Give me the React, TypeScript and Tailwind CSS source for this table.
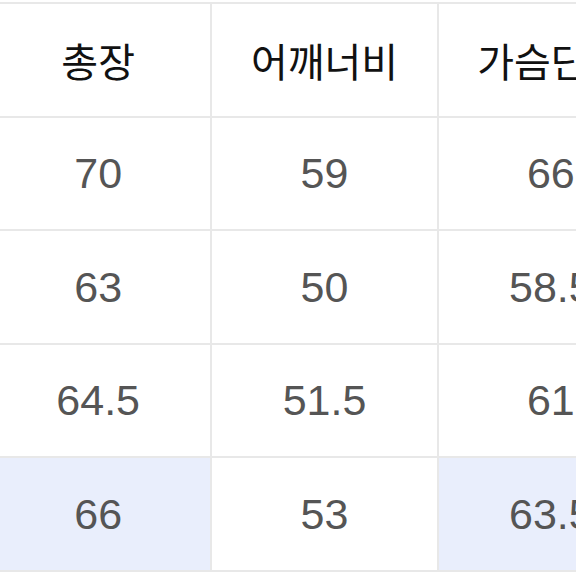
import React from "react";

const header = ["총장", "어깨너비", "가슴단면"];
const rows = [
  ["70", "59", "66"],
  ["63", "50", "58.5"],
  ["64.5", "51.5", "61"],
  ["66", "53", "63.5"],
];

export default function App() {
  return (
    <div className="w-[576px] h-[576px] overflow-hidden bg-white relative">
      <div className="ml-[-16px] mt-[2px] w-[681px] grid grid-cols-3 gap-[2px] border-2 border-[#e8e8e8] bg-[#e8e8e8]">
        {header.map((h) => (
          <div
            key={h}
            className="h-[111.5px] bg-white flex items-center justify-center text-[40px] text-[#111] whitespace-nowrap"
            style={{ fontFamily: '"Noto Sans CJK KR", "Noto Sans", sans-serif' }}
          >
            {h}
          </div>
        ))}
        {rows.map((r, ri) =>
          r.map((v, ci) => {
            const hl = ri === rows.length - 1 && ci !== 1;
            return (
              <div
                key={`${ri}-${ci}`}
                className={`h-[111.5px] flex items-center justify-center text-[43px] text-[#555] whitespace-nowrap ${hl ? "bg-[#e9eefc]" : "bg-white"}`}
                style={{ fontFamily: '"Liberation Sans", Arial, sans-serif' }}
              >
                {v}
              </div>
            );
          })
        )}
      </div>
    </div>
  );
}
